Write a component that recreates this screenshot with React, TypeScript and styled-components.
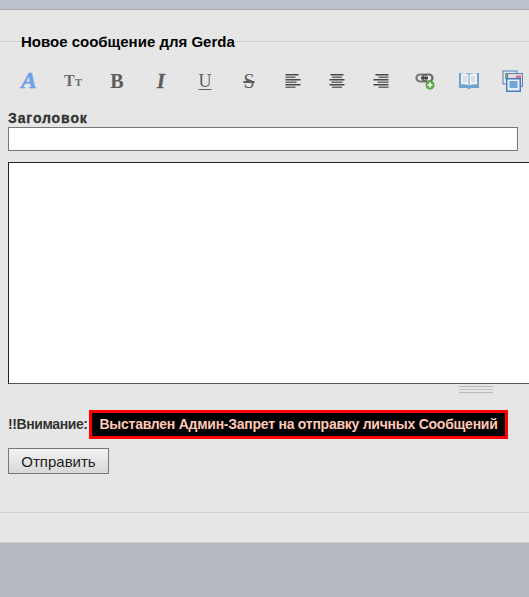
import styled, { createGlobalStyle } from 'styled-components';

const GlobalStyle = createGlobalStyle`
  html, body {
    margin: 0;
    padding: 0;
    height: 597px;
    overflow: hidden;
    background: #b5bac3;
    font-family: "Liberation Sans", Arial, sans-serif;
  }
`;

function LinkIcon() {
  return (
    <svg width="20" height="20" viewBox="0 0 20 20">
      <rect x="1.500" y="3.500" width="10" height="7" rx="3.500" fill="none" stroke="#7a7a7a" strokeWidth="2.200" />
      <rect x="7.500" y="3.500" width="10" height="7" rx="3.500" fill="none" stroke="#666" strokeWidth="2.200" />
      <rect x="6" y="6" width="7" height="2" fill="#444" />
      <circle cx="15" cy="14" r="4.500" fill="#5aa845" />
      <path d="M15 11.500v5M12.500 14h5" stroke="#fff" strokeWidth="1.600" />
    </svg>
  );
}

function BookIcon() {
  return (
    <svg width="22" height="20" viewBox="0 0 22 20">
      <path d="M1 2h9l1 1 1-1h9v15h-8l-2 1.500-2-1.500H1z" fill="#6ea3cf" />
      <path d="M3 2.500c3-.7 5.500-.3 7.500 1v11c-2-1.200-4.500-1.500-7.500-1zM19 2.500c-3-.7-5.500-.3-7.500 1v11c2-1.200 4.500-1.500 7.500-1z" fill="#eef1f3" />
      <path d="M5 6h4M5 8h4M5 10h4M13 6h4M13 8h4M13 10h4" stroke="#c3ccd4" />
    </svg>
  );
}

function ImagesIcon() {
  return (
    <svg width="22" height="22" viewBox="0 0 22 22">
      <rect x="1" y="1" width="14" height="13" fill="#dfe6ee" stroke="#5b7fb5" />
      <rect x="3" y="3" width="7" height="6" fill="#6cab6c" />
      <rect x="5.500" y="3.500" width="15" height="13" fill="#e3d9df" stroke="#5b7fb5" />
      <rect x="14" y="5.500" width="5" height="7" fill="#c77d92" />
      <rect x="4.750" y="8.750" width="13.500" height="12.500" fill="#e6eef6" stroke="#4a7cc0" strokeWidth="1.500" />
      <rect x="7.500" y="11" width="8" height="7" fill="#6ea6d6" />
    </svg>
  );
}

function AlignIcon({ align }: { align: 'left' | 'center' | 'right' }) {
  const widths = [13, 10, 15, 11, 15, 10];
  return (
    <svg width="16" height="15" viewBox="0 0 16 15">
      {widths.map((w, i) => {
        const x = align === 'left' ? 0.5 : align === 'right' ? 15.5 - w : 8 - w / 2;
        return <rect key={i} x={x} y={i * 2.5} width={w} height="1.500" fill={i % 2 ? '#6a6a6a' : '#484848'} />;
      })}
    </svg>
  );
}

function App() {
  return (
    <>
      <GlobalStyle />
      <TopBar />
      <Panel>
        <MessageForm>
          <Title>Новое сообщение для Gerda</Title>
          <Toolbar>
            <ToolButton><FontGlyph>A</FontGlyph></ToolButton>
            <ToolButton><SizeGlyph>T<small>T</small></SizeGlyph></ToolButton>
            <ToolButton><BoldGlyph>B</BoldGlyph></ToolButton>
            <ToolButton><ItalicGlyph>I</ItalicGlyph></ToolButton>
            <ToolButton><UnderGlyph>U</UnderGlyph></ToolButton>
            <ToolButton><StrikeGlyph>S</StrikeGlyph></ToolButton>
            <ToolButton><AlignIcon align="left" /></ToolButton>
            <ToolButton><AlignIcon align="center" /></ToolButton>
            <ToolButton><AlignIcon align="right" /></ToolButton>
            <ToolButton><LinkIcon /></ToolButton>
            <ToolButton><BookIcon /></ToolButton>
            <ToolButton><ImagesIcon /></ToolButton>
          </Toolbar>
          <FieldLabel>Заголовок</FieldLabel>
          <SubjectInput type="text" />
          <MessageBox />
          <ResizeHandle />
          <WarningRow>
            <WarningLabel>!!Внимание:</WarningLabel>
            <WarningBox>Выставлен Админ-Запрет на отправку личных Сообщений</WarningBox>
          </WarningRow>
          <SendButton type="button">Отправить</SendButton>
        </MessageForm>
        <PanelFooter />
      </Panel>
    </>
  );
}
export default App;

const TopBar = styled.div`
  height: 9px;
  background: #bcc2cb;
  border-bottom: 1px solid #a9abae;
`;
const Panel = styled.div`
  height: 532px;
  background: #e6e6e6;
  border-bottom: 1px solid #c9c9c9;
  display: flex;
  flex-direction: column;
  overflow: hidden;
`;
const MessageForm = styled.fieldset`
  margin: 20px 0 0;
  padding: 0 0 0 8px;
  min-width: 0;
  height: 481px;
  box-sizing: content-box;
  border: 0;
  border-top: 1px solid #cfcfcf;
`;
const Title = styled.legend`
  margin-left: 13px;
  padding: 2px 0 0;
  font-size: 15px;
  font-weight: bold;
  line-height: 20px;
  color: #000;
`;
const Toolbar = styled.div`
  display: flex;
  margin: 11px 0 0 -1px;
  height: 36px;
  width: 528px;
  align-items: center;
`;
const ToolButton = styled.span`
  flex: 0 0 44px;
  display: flex;
  justify-content: center;
  align-items: center;
  height: 24px;
`;
const Glyph = styled.span`
  font-family: "Liberation Serif", "Times New Roman", serif;
  font-size: 20px;
  line-height: 24px;
  color: #5c5c5c;
`;
const FontGlyph = styled(Glyph)`
  font-size: 23px;
  font-style: italic;
  font-weight: bold;
  color: #6f9fe6;
  -webkit-text-stroke: 0.6px #6f9fe6;
`;
const SizeGlyph = styled(Glyph)`
  font-size: 16px;
  font-weight: bold;
  color: #6a6a6a;
  small {
    font-size: 11px;
  }
`;
const BoldGlyph = styled(Glyph)`
  font-weight: bold;
`;
const ItalicGlyph = styled(Glyph)`
  font-style: italic;
  font-weight: bold;
  -webkit-text-stroke: 0.4px #5c5c5c;
`;
const UnderGlyph = styled(Glyph)`
  font-size: 18px;
  text-decoration: underline;
  text-underline-offset: 2px;
`;
const StrikeGlyph = styled(Glyph)`
  padding: 0 3px;
  text-decoration: line-through;
`;
const FieldLabel = styled.div`
  margin: 11px 0 1px;
  font-size: 14px;
  font-weight: bold;
  line-height: 16px;
  color: #333;
  -webkit-text-stroke: 0.3px #333;
  letter-spacing: 0.9px;
`;
const SubjectInput = styled.input`
  display: block;
  box-sizing: border-box;
  width: 510px;
  height: 24px;
  margin: 0;
  padding: 0;
  background: #fff;
  border: 1px solid #777;
  border-radius: 0;
`;
const MessageBox = styled.div`
  box-sizing: border-box;
  width: 540px;
  height: 222px;
  margin-top: 11px;
  background: #fff;
  border: 1px solid #222;
  border-bottom-color: #555;
`;
const ResizeHandle = styled.div`
  width: 34px;
  height: 5px;
  margin: 2px 0 0 451px;
  border-top: 1px solid #bbb;
  border-bottom: 1px solid #bbb;
  background: linear-gradient(#e6e6e6 40%, #c4c4c4 40%, #c4c4c4 60%, #e6e6e6 60%);
`;
const WarningRow = styled.div`
  display: flex;
  align-items: center;
  margin-top: 17px;
`;
const WarningLabel = styled.span`
  width: 81px;
  margin-bottom: 2px;
  font-size: 14px;
  letter-spacing: -0.4px;
  font-weight: bold;
  color: #333;
  white-space: nowrap;
`;
const WarningBox = styled.span`
  box-sizing: border-box;
  width: 419px;
  height: 29px;
  border: 3px solid #f00;
  background: #000;
  color: #ffc9b8;
  font-size: 14px;
  letter-spacing: -0.25px;
  font-weight: bold;
  line-height: 23px;
  text-align: center;
  white-space: nowrap;
`;
const SendButton = styled.button`
  display: block;
  box-sizing: border-box;
  width: 101px;
  height: 26px;
  margin-top: 9px;
  padding: 0;
  border: 1px solid #777;
  border-radius: 0;
  background: linear-gradient(#f2f2f2, #d8d8d8);
  color: #222;
  font-family: "Liberation Sans", Arial, sans-serif;
  font-size: 15px;
`;
const PanelFooter = styled.div`
  flex: 1;
  border-top: 1px solid #cfcfcf;
`;
